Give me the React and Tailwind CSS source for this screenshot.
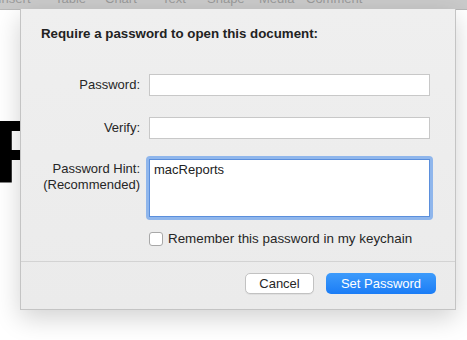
import React from "react";

const Field = ({ label, children, className = "", labelClass = "" }) => (
  <div className={`flex ${className}`}>
    <div className={`w-[128px] shrink-0 pr-[9px] text-right text-[13px] leading-[16px] text-[#262626] ${labelClass}`}>
      {label}
    </div>
    {children}
  </div>
);

export default function App() {
  return (
    <div
      className="relative h-[340px] w-[467px] overflow-hidden bg-white"
      style={{ fontFamily: '"Liberation Sans", Arial, sans-serif' }}
    >
      {/* toolbar strip, mostly scrolled out of view */}
      <div className="h-[10px] overflow-hidden border-b border-[#b8b8b8] bg-[#cacaca]">
        <div className="-mt-[9px] flex text-[13px] leading-[16px] text-[#9a9a9a]">
          <span className="-ml-[2px] w-[57px]">Insert</span>
          <span className="w-[50px]">Table</span>
          <span className="w-[57px]">Chart</span>
          <span className="w-[45px]">Text</span>
          <span className="w-[52px]">Shape</span>
          <span className="w-[47px]">Media</span>
          <span>Comment</span>
        </div>
      </div>

      {/* document content behind the sheet */}
      <div className="mt-[92px] -ml-[7px] text-[89px] font-bold leading-[100px] text-black">F</div>

      {/* password sheet */}
      <div className="absolute left-[20px] top-[9px] flex h-[301px] w-[436px] flex-col border-x border-b border-[#c4c4c4] bg-gradient-to-b from-[#efefef] to-[#ebebeb] shadow-[0_8px_24px_rgba(0,0,0,0.18)]">
        <div className="pl-[20px] pt-[17px] text-[13.3px] font-bold leading-[16px] text-[#222]">
          Require a password to open this document:
        </div>

        <Field label="Password:" className="mt-[32px] items-center">
          <div className="h-[22px] w-[281px] border border-[#c8c8c8] bg-white" />
        </Field>

        <Field label="Verify:" className="mt-[21px] items-center">
          <div className="h-[22px] w-[281px] border border-[#c8c8c8] bg-white" />
        </Field>

        <Field
          label={<>Password Hint:<br />(Recommended)</>}
          className="mt-[17px] items-start"
          labelClass="pt-[5px]"
        >
          <div className="-ml-[3px] rounded-[4px] bg-[#8fb6ec] p-[3px]">
            <div className="h-[58px] w-[281px] border border-[#5b8fdc] bg-white px-[4px] pt-[2px] text-[13px] leading-[16px] text-[#222]">
              macReports
            </div>
          </div>
        </Field>

        <div className="mt-[11px] flex items-center pl-[128px]">
          <div className="h-[14px] w-[14px] rounded-[3px] border border-[#a8a8a8] bg-white" />
          <span className="ml-[5px] text-[13.4px] leading-[16px] text-[#262626]">
            Remember this password in my keychain
          </span>
        </div>

        <div className="mt-[14px] border-t border-[#d3d3d3]" />

        <div className="mt-[11px] flex justify-end gap-[12px] pr-[19px]">
          <button className="h-[21px] w-[69px] rounded-[5px] border border-[#c2c2c2] bg-white text-[13px] leading-[16px] text-[#262626] shadow-[0_1px_0_rgba(0,0,0,0.05)]">
            Cancel
          </button>
          <button className="h-[21px] w-[110px] rounded-[5px] bg-gradient-to-b from-[#3d9bfb] to-[#1a7cf6] text-[13px] leading-[16px] text-white">
            Set Password
          </button>
        </div>
      </div>
    </div>
  );
}
